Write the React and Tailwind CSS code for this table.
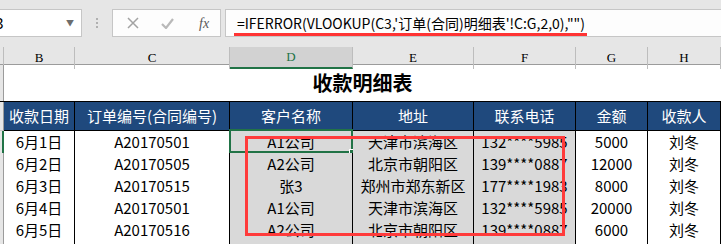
import React from 'react';

const cols = ['B', 'C', 'D', 'E', 'F', 'G', 'H'];
const heads = ['收款日期', '订单编号(合同编号)', '客户名称', '地址', '联系电话', '金额', '收款人'];
const rows = [
  ['6月1日', 'A20170501', 'A1公司', '天津市滨海区', '132****5985', '5000', '刘冬'],
  ['6月2日', 'A20170505', 'A2公司', '北京市朝阳区', '139****0887', '12000', '刘冬'],
  ['6月3日', 'A20170515', '张3', '郑州市郑东新区', '177****1983', '8000', '刘冬'],
  ['6月4日', 'A20170501', 'A1公司', '天津市滨海区', '132****5985', '20000', '刘冬'],
  ['6月5日', 'A20170516', 'A2公司', '北京市朝阳区', '139****0887', '6000', '刘冬'],
  ['', '', '', '', '', '', ''],
];

const grid = 'grid grid-cols-[4px_71px_155px_123px_121px_102px_72px_73px]';
const cjk = { fontFamily: '"Noto Sans CJK SC", "Noto Sans", sans-serif' };

// columns D..F carry the grey fill
const shaded = (i) => i >= 2 && i <= 4;

const App = () => {
  return (
    <div className="relative w-[721px] h-[244px] overflow-hidden bg-white" style={cjk}>
      {/* formula bar */}
      <div className="h-[47px] bg-[#e6e6e6] pt-[9px] flex items-start">
        <div className="-ml-[20px] w-[102px] h-[28px] bg-white border border-[#c6c6c6] flex items-center pl-[4px] pr-[7px]">
          <span className="text-[15px] text-black flex-1">D3</span>
          <span className="text-[8px] text-[#6d6d6d]">▼</span>
        </div>
        <div className="w-[30px] h-[28px] flex flex-col items-center justify-center gap-[2px]">
          <span className="w-[2px] h-[2px] bg-[#b0b0b0]" />
          <span className="w-[2px] h-[2px] bg-[#b0b0b0]" />
          <span className="w-[2px] h-[2px] bg-[#b0b0b0]" />
        </div>
        <div className="w-[109px] h-[28px] bg-[#fdfdfd] border border-[#c6c6c6] flex items-center pl-[14px] gap-[22px]">
          <svg width="12" height="12" viewBox="0 0 12 12">
            <path d="M1 1 L11 11 M11 1 L1 11" stroke="#a3a3a3" strokeWidth="1.5" fill="none" />
          </svg>
          <svg width="13" height="11" viewBox="0 0 13 11">
            <path d="M1 6 L5 10 L12 1" stroke="#b9b9b9" strokeWidth="2.2" fill="none" />
          </svg>
          <span className="ml-[3px] text-[14px] italic text-[#595959]" style={{ fontFamily: '"Liberation Serif", serif' }}>
            fx
          </span>
        </div>
        <div className="ml-[4px] flex-1 h-[28px] bg-[#fdfdfd] border border-[#c6c6c6] border-r-0 flex items-center pl-[11px]">
          <span className="text-[14px] text-black whitespace-nowrap">=IFERROR(VLOOKUP(C3,'订单(合同)明细表'!C:G,2,0),"")</span>
        </div>
      </div>

      {/* column letters */}
      <div className={`${grid} h-[18px] bg-[#e6e6e6] border-b border-[#9b9b9b]`}>
        <div className="border-r border-[#bdbdbd]" />
        {cols.map((c) => (
          <div
            key={c}
            className={
              c === 'D'
                ? 'bg-[#d2d2d2] border-r border-[#bdbdbd] border-b-2 border-b-[#217346] text-[#217346] flex items-center justify-center text-[13px]'
                : 'border-r border-[#bdbdbd] flex items-center justify-center text-[13px] text-black'
            }
            style={{ fontFamily: '"Liberation Serif", serif' }}
          >
            {c}
          </div>
        ))}
      </div>

      {/* title row */}
      <div className={`${grid} h-[37px] border-b border-black`}>
        <div className="bg-[#e6e6e6] border-r border-[#9b9b9b]" />
        <div className="col-span-7 flex items-center justify-center text-[20px] font-bold text-black">收款明细表</div>
      </div>

      {/* header row */}
      <div className={`${grid} h-[29px]`}>
        <div className="bg-[#e6e6e6] border-r border-[#9b9b9b] border-b border-b-[#c8c8c8]" />
        {heads.map((h) => (
          <div key={h} className="bg-[#1f497d] border-r border-b border-black flex items-center justify-center text-[15px] text-white">
            {h}
          </div>
        ))}
      </div>

      {/* data rows */}
      {rows.map((r, ri) => (
        <div key={ri} className={`${grid} h-[22px]`}>
          <div
            className={
              ri === 0
                ? 'bg-[#e6e6e6] border-r-2 border-[#217346] border-b border-b-[#c8c8c8]'
                : 'bg-[#e6e6e6] border-r border-[#9b9b9b] border-b border-b-[#c8c8c8]'
            }
          />
          {r.map((v, ci) => (
            <div
              key={ci}
              className={`relative border-r border-b border-black flex items-center justify-center text-[15px] text-black ${
                shaded(ci) ? 'bg-[#d9d9d9]' : 'bg-white'
              }`}
            >
              {v}
              {ri === 0 && ci === 2 && (
                <div className="absolute -left-[1px] -top-[2px] w-[124px] h-[24px] border-2 border-[#217346]">
                  <span className="absolute -right-[4px] -bottom-[4px] w-[6px] h-[6px] bg-[#217346] border border-white" />
                </div>
              )}
            </div>
          ))}
        </div>
      ))}

      {/* red annotation frame */}
      <div className="absolute left-[245px] top-[136px] w-[320px] h-[100px] border-[3px] border-[#ff3b3b]" />
      <div className="absolute left-[234px] top-[33px] w-[353px] h-[3px] bg-[#ff3333]" />
    </div>
  );
};

export default App;
